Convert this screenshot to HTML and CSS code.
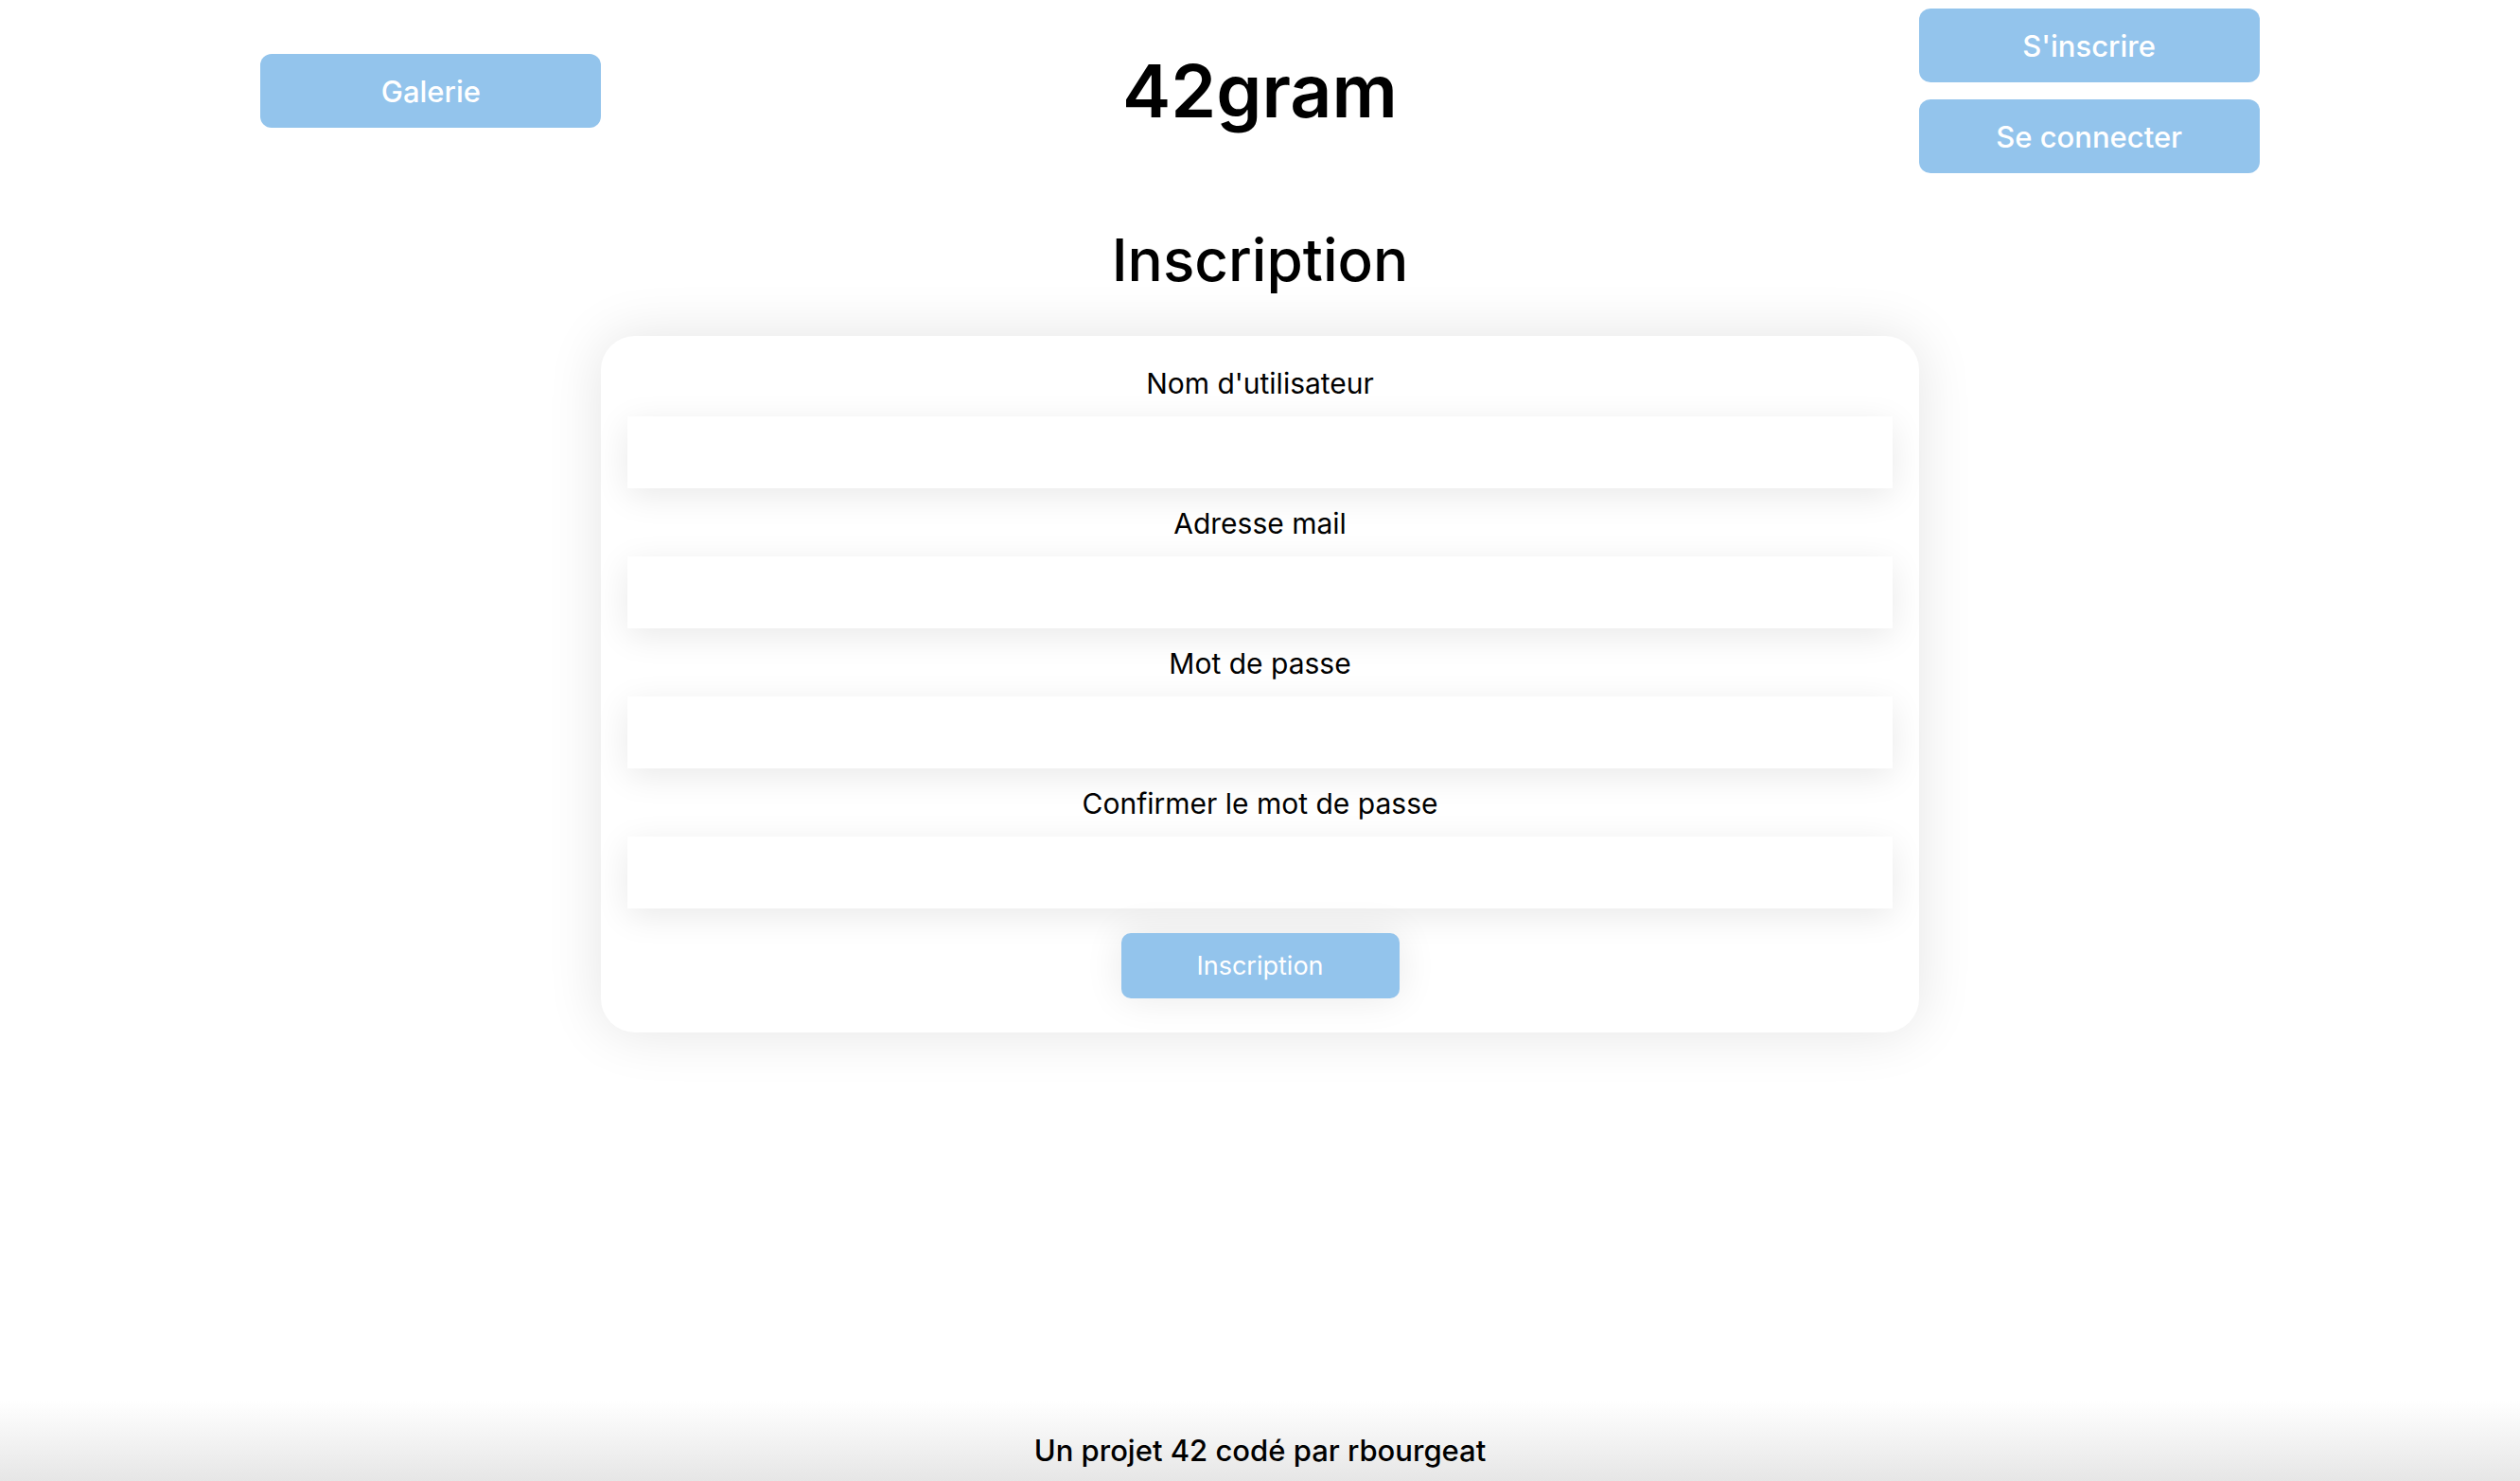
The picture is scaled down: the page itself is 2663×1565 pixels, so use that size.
FILE: index.html
```html
<!DOCTYPE html>
<html lang="fr">
<head>
<meta charset="utf-8">
<title>42gram - Inscription</title>
<link rel="stylesheet" href="styles.css">
</head>
<body>
<div class="page">
  <header class="header">
    <button class="btn nav-btn">Galerie</button>
    <h1 class="logo">42gram</h1>
    <div class="nav-stack">
      <button class="btn nav-btn">S'inscrire</button>
      <button class="btn nav-btn">Se connecter</button>
    </div>
  </header>

  <main class="main">
    <h2 class="page-title">Inscription</h2>
    <form class="card">
      <label class="field-label">Nom d'utilisateur</label>
      <input class="field-input" type="text">
      <label class="field-label">Adresse mail</label>
      <input class="field-input" type="email">
      <label class="field-label">Mot de passe</label>
      <input class="field-input" type="password">
      <label class="field-label">Confirmer le mot de passe</label>
      <input class="field-input" type="password">
      <button class="btn submit-btn" type="button">Inscription</button>
    </form>
  </main>

  <footer class="footer">Un projet 42 codé par rbourgeat</footer>
</div>
</body>
</html>
```

FILE: styles.css
```css
* { box-sizing: border-box; }

html, body {
  margin: 0;
  padding: 0;
  background: #ffffff;
}

body {
  font-family: "Inter", "Noto Sans", "DejaVu Sans", sans-serif;
  color: #000;
}

.page {
  min-height: 100vh;
  display: flex;
  flex-direction: column;
}

.header {
  display: flex;
  justify-content: space-around;
  align-items: center;
  height: 192px;
}

.nav-stack {
  display: flex;
  flex-direction: column;
  gap: 18px;
}

.btn {
  border: none;
  background: #93c4ec;
  color: #fff;
  font-family: inherit;
  cursor: pointer;
}

.nav-btn {
  width: 360px;
  height: 78px;
  border-radius: 12px;
  font-size: 31px;
  font-weight: 500;
}

.logo {
  margin: 0;
  font-size: 77px;
  font-weight: 600;
  line-height: 1;
  letter-spacing: 0;
}

.main {
  display: flex;
  flex-direction: column;
  align-items: center;
}

.page-title {
  margin: 45px 0 43px;
  font-size: 62px;
  font-weight: 500;
  line-height: 75px;
}

.card {
  width: 1393px;
  padding: 13px 0 36px;
  border-radius: 36px;
  background: #fff;
  box-shadow: 0 0 60px rgba(0, 0, 0, 0.11);
  display: flex;
  flex-direction: column;
  align-items: center;
}

.field-label {
  display: block;
  font-size: 30px;
  line-height: 35px;
  margin: 20px 0 17px;
  font-weight: 400;
}

.field-input {
  display: block;
  width: 96%;
  height: 76px;
  border: none;
  background: #fff;
  box-shadow: 0 8px 36px rgba(0, 0, 0, 0.09);
  outline: none;
}

.submit-btn {
  margin-top: 26px;
  width: 294px;
  height: 69px;
  border-radius: 10px;
  font-size: 27px;
  font-weight: 400;
  box-shadow: 0 0 40px rgba(0, 0, 0, 0.09);
}

.footer {
  margin-top: auto;
  height: 85px;
  padding-top: 36px;
  text-align: center;
  font-size: 31px;
  line-height: 34px;
  font-weight: 500;
  background: linear-gradient(to bottom, rgba(230, 230, 230, 0) 0%, #e6e6e6 100%);
}
```
